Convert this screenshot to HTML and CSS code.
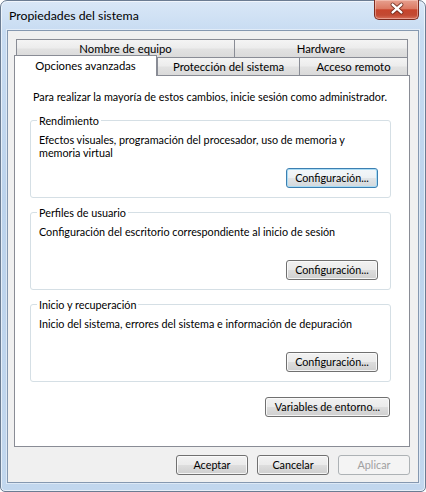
FILE: index.html
```html
<!DOCTYPE html>
<html lang="es">
<head>
<meta charset="utf-8">
<title>Propiedades del sistema</title>
<link rel="stylesheet" href="styles.css">
</head>
<body>
<div class="window">
  <div class="titlebar">
    <span class="title">Propiedades del sistema</span>
    <div class="close">
      <svg width="45" height="20" viewBox="0 0 45 20">
        <path d="M19 5.5 L28 13.5 M28 5.5 L19 13.5" stroke="#5a1d12" stroke-width="4.2" stroke-linecap="round" fill="none" opacity="0.75"/>
        <path d="M19 5.5 L28 13.5 M28 5.5 L19 13.5" stroke="#ffffff" stroke-width="2.4" stroke-linecap="round" fill="none"/>
      </svg>
    </div>
  </div>
  <div class="client">
    <div class="tabrow back">
      <div class="tab t-nombre">Nombre de equipo</div>
      <div class="tab t-hardware">Hardware</div>
    </div>
    <div class="tabrow front">
      <div class="tab sel">Opciones avanzadas</div>
      <div class="tab t-prot">Protección del sistema</div>
      <div class="tab t-acceso">Acceso remoto</div>
    </div>
    <div class="panel">
      <p class="note">Para realizar la mayoría de estos cambios, inicie sesión como administrador.</p>
      <div class="group">
        <span class="legend">Rendimiento</span>
        <p class="desc">Efectos visuales, programación del procesador, uso de memoria y<br>memoria virtual</p>
        <button class="btn cfg focus">Configuración...</button>
      </div>
      <div class="group">
        <span class="legend">Perfiles de usuario</span>
        <p class="desc">Configuración del escritorio correspondiente al inicio de sesión</p>
        <button class="btn cfg">Configuración...</button>
      </div>
      <div class="group">
        <span class="legend">Inicio y recuperación</span>
        <p class="desc">Inicio del sistema, errores del sistema e información de depuración</p>
        <button class="btn cfg">Configuración...</button>
      </div>
      <button class="btn env">Variables de entorno...</button>
    </div>
    <div class="actions">
      <button class="btn act">Aceptar</button>
      <button class="btn act">Cancelar</button>
      <button class="btn act disabled" disabled>Aplicar</button>
    </div>
  </div>
</div>
</body>
</html>
```
FILE: styles.css
```css
* { box-sizing: border-box; margin: 0; padding: 0; }
html, body { width: 426px; height: 492px; overflow: hidden; background: #ffffff; }
body { font-family: Lato, "Liberation Sans", sans-serif; font-size: 10.8px; color: #000; }

.window {
  width: 426px; height: 492px;
  border: 1px solid #6b7c92;
  border-radius: 7px 7px 5px 5px;
  background: linear-gradient(180deg, #d9e7f7 0px, #c8dcf2 30px, #bcd3ec 200px, #c2d7ee 492px);
  box-shadow: inset 0 0 0 1px rgba(255,255,255,0.6);
  padding: 0 6px 8px 6px;
  display: flex; flex-direction: column;
}
.titlebar { height: 29px; display: flex; align-items: flex-start; }
.title { font-size: 12.3px; line-height: 29px; padding-left: 2px; color: #000; }
.close {
  margin-left: auto; margin-top: -1px;
  width: 45px; height: 20px;
  border: 1px solid #7d2b1f; border-top: 0;
  border-radius: 0 0 5px 5px;
  background: linear-gradient(180deg, #e7a08f 0%, #dc7a64 45%, #c7452d 52%, #c24a33 80%, #d8705a 100%);
  box-shadow: inset 0 0 0 1px rgba(255,220,210,0.45);
  display: flex;
}
.close svg { display: block; margin: -1px 0 0 -1px; }

.client {
  flex: 1;
  background: #f0f0f0;
  border: 1px solid #8598b0;
  box-shadow: 0 0 0 1px rgba(255,255,255,0.45);
  padding: 8px 8px 7px 6px;
  display: flex; flex-direction: column;
}

.tabrow { display: flex; }
.back { padding: 0 2px; height: 18px; }
.front { padding: 0 2px 0 0; height: 20px; margin-top: -2px; align-items: flex-end; }
.tab {
  height: 18px;
  border: 1px solid #898c95; border-bottom: 0;
  background: linear-gradient(180deg, #f4f4f4 0%, #ececec 48%, #e2e2e2 52%, #dadada 100%);
  font-size: 11.3px; line-height: 17px; text-align: center; white-space: nowrap;
}
.t-nombre { width: 219px; }
.t-hardware { width: 174px; margin-left: -1px; }
.t-prot { width: 143px; }
.t-acceso { width: 109px; margin-left: -1px; }
.sel {
  width: 143px; height: 21px; margin-bottom: -1px;
  background: #ffffff; line-height: 19px;
  position: relative; z-index: 1;
}

.panel {
  height: 372px;
  background: #ffffff;
  border: 1px solid #898c95;
  padding: 14px 18px 0 15px;
  display: flex; flex-direction: column;
}
.note { line-height: 13px; padding-left: 3px; margin-bottom: 17px; }
.group {
  height: 78px;
  border: 1px solid #d5dfe5; border-radius: 3px;
  padding: 0 12px 9px 8px;
  margin-bottom: 14px;
  display: flex; flex-direction: column;
}
.legend {
  align-self: flex-start;
  line-height: 13px; margin: -7px 0 0 -2px; padding: 0 2px;
  background: #ffffff;
}
.desc { margin-top: 6px; line-height: 13px; }

.btn {
  height: 20px;
  font-family: inherit; font-size: 10.8px; color: #000; line-height: 18px;
  border: 1px solid #707070; border-radius: 3px;
  background: linear-gradient(180deg, #f2f2f2 0%, #ebebeb 48%, #dddddd 52%, #cfcfcf 100%);
  box-shadow: inset 0 0 0 1px rgba(252,252,252,0.85);
  text-align: center; white-space: nowrap;
}
.cfg { width: 92px; margin-top: auto; align-self: flex-end; }
.focus {
  border-color: #3c7fb1;
  box-shadow: inset 0 0 0 1px #a9dcf5;
  background: linear-gradient(180deg, #f3f7fa 0%, #edf1f4 48%, #e0e4e7 52%, #d3d8dc 100%);
}
.env { width: 125px; align-self: flex-end; margin: 1px 1px 0 0; }

.actions { display: flex; justify-content: flex-end; gap: 9px; margin-top: 8px; }
.act { width: 72px; }
.disabled {
  border-color: #adb2b5;
  background: #f4f4f4;
  box-shadow: none;
  color: #a0a0a0;
}
```
